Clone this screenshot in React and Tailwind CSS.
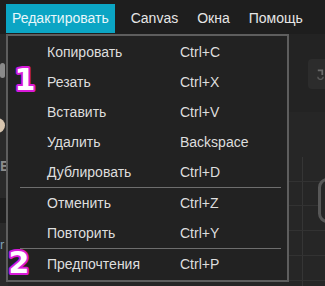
import React from "react";

const items1 = [
  ["Копировать", "Ctrl+C"],
  ["Резать", "Ctrl+X"],
  ["Вставить", "Ctrl+V"],
  ["Удалить", "Backspace"],
  ["Дублировать", "Ctrl+D"],
];
const items2 = [
  ["Отменить", "Ctrl+Z"],
  ["Повторить", "Ctrl+Y"],
];
const items3 = [["Предпочтения", "Ctrl+P"]];

function Row({ label, sc }) {
  return (
    <div className="flex h-[30px] items-center pl-[39px] text-[14px] text-[#dedede]">
      <span className="w-[133px]">{label}</span>
      <span>{sc}</span>
    </div>
  );
}

function Sep() {
  return <div className="ml-[12px] mr-[6px] h-px bg-[#6e6e6e]" />;
}

function Badge({ n, className }) {
  return (
    <svg className={className} width="34" height="34" viewBox="0 0 34 34">
      <text
        x="17"
        y="28"
        textAnchor="middle"
        fontFamily="'DejaVu Sans', sans-serif"
        fontWeight="900"
        fontSize="30"
        fill="#ffffff"
        stroke="#d91ad9"
        strokeWidth="4"
        strokeLinejoin="round"
        paintOrder="stroke fill"
      >
        {n}
      </text>
    </svg>
  );
}

export default function App() {
  return (
    <div
      className="relative h-[286px] w-[325px] overflow-hidden bg-[#262626]"
      style={{ fontFamily: "'Liberation Sans', Arial, sans-serif" }}
    >
      {/* menu bar */}
      <div className="flex h-[34px] items-start bg-[#1e1e1e] pt-[4px] text-[14px] text-[#e6e6e6]">
        <div className="ml-[6px] flex h-[29px] items-center bg-[#0ba5c4] px-[6px] text-[#e8f7fb]">
          Редактировать
        </div>
        <div className="ml-[16px] flex h-[29px] items-center">Canvas</div>
        <div className="ml-[19px] flex h-[29px] items-center">Окна</div>
        <div className="ml-[19px] flex h-[29px] items-center">Помощь</div>
      </div>

      {/* background workspace */}
      <div className="flex h-[252px]">
        <div className="relative w-[8px] bg-[#2a2a2a]">
          <div className="absolute left-0 top-[29px] h-[15px] w-[5px] rounded-sm bg-[#8a8a8a]" />
          <div className="absolute left-[-10px] top-[84px] h-[15px] w-[15px] rounded-full bg-[#d8c6b0]" />
          <div className="absolute left-0 top-[125px] text-[14px] font-bold leading-none text-[#8c8c8c]">E</div>
          <div className="absolute left-0 top-[164px] h-[25px] w-[8px] bg-[#1f1f1f]" />
          <div className="absolute left-0 top-[204px] text-[13px] leading-none text-[#7f9fb8]">r</div>
        </div>
        <div className="flex-1" />
        <div className="relative flex w-[37px] flex-col">
          <div className="h-[78px] bg-[#232323] pt-[25px]">
            <div className="ml-[20px] flex h-[30px] items-center rounded-l-[4px] bg-[#2c2c2c] pl-[8px]">
              <svg width="10" height="12" viewBox="0 0 10 12">
                <path d="M2 2h5v5" fill="none" stroke="#6a6a6a" strokeWidth="2" />
                <path d="M2 9a3 3 0 0 0 6 0" fill="none" stroke="#5a5a5a" strokeWidth="1.5" />
              </svg>
            </div>
          </div>
          <div className="relative flex-1 bg-[#262626]">
            <svg className="absolute left-0 top-0" width="37" height="174" viewBox="0 0 37 174">
              <line x1="14.5" y1="45" x2="14.5" y2="174" stroke="#353535" strokeWidth="1" />
              {[69, 93, 118, 143, 168].map((y) => (
                <line key={y} x1="0" y1={y + 0.5} x2="37" y2={y + 0.5} stroke="#323232" strokeWidth="1" />
              ))}
              <rect x="31.5" y="67.5" width="20" height="42" rx="8" fill="#262626" stroke="#575757" strokeWidth="3" />
            </svg>
          </div>
        </div>
      </div>

      {/* dropdown */}
      <div className="absolute left-[6px] top-[34px] flex h-[248px] w-[283px] flex-col border-2 border-[#5e5e5e] bg-[#222222] pt-px">
        {items1.map(([l, s]) => (
          <Row key={l} label={l} sc={s} />
        ))}
        <Sep />
        {items2.map(([l, s]) => (
          <Row key={l} label={l} sc={s} />
        ))}
        <Sep />
        {items3.map(([l, s]) => (
          <Row key={l} label={l} sc={s} />
        ))}
      </div>

      <Badge n="1" className="absolute left-[8px] top-[62px]" />
      <Badge n="2" className="absolute left-[2px] top-[245px]" />
    </div>
  );
}
